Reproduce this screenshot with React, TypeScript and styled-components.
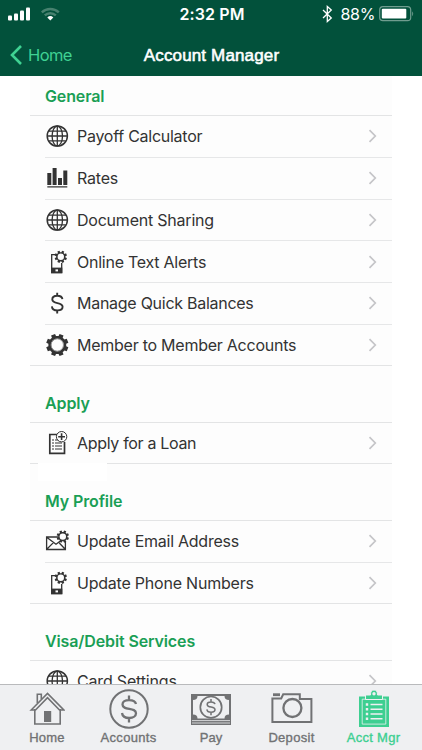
import React from 'react';
import styled, { createGlobalStyle } from 'styled-components';

const GlobalStyle = createGlobalStyle`
  * { box-sizing: border-box; }
  body { margin: 0; background: #fff; font-family: Inter, sans-serif; }
`;

const Screen = styled.div`
  width: 422px;
  height: 750px;
  display: flex;
  flex-direction: column;
  overflow: hidden;
  background: #fff;
`;

const Header = styled.header`
  flex: none;
  height: 76px;
  background: #02513b;
  color: #fff;
`;

const StatusBar = styled.div`
  display: grid;
  grid-template-columns: 1fr auto 1fr;
  align-items: center;
  height: 28px;
  padding: 0 8px;
`;

const Clock = styled.span`
  font-size: 16px;
  font-weight: 600;
  letter-spacing: 0.1px;
  padding-left: 2px;
  margin-top: -1px;
`;

const Signals = styled.div`
  display: flex;
  align-items: center;
  gap: 10px;
  margin-top: -1px;
`;

const Power = styled.div`
  display: flex;
  align-items: center;
  justify-content: flex-end;
  margin-right: -1px;
`;

const Percent = styled.span`
  font-size: 16px;
  letter-spacing: -0.35px;
  margin: 0 4px 0 8px;
`;

const NavBar = styled.nav`
  display: grid;
  grid-template-columns: 1fr auto 1fr;
  align-items: center;
  height: 54px;
  padding: 0 10px;
`;

const Back = styled.a`
  display: flex;
  align-items: center;
  gap: 6px;
  color: #3fd293;
  font-size: 16.5px;
  letter-spacing: -0.6px;
`;

const Title = styled.h1`
  margin: 1px 0 0 1px;
  font: 400 17px "Liberation Sans", sans-serif;
  letter-spacing: 0.15px;
  -webkit-text-stroke: 0.55px currentColor;
`;

const Content = styled.main`
  flex: 1;
  min-height: 0;
  overflow: hidden;
  margin: 0 30px;
  background: #fdfdfd;
`;

const SectionTitle = styled.h2<{ $first?: boolean }>`
  margin: 0;
  height: ${p => (p.$first ? 40 : 57)}px;
  padding: ${p => (p.$first ? 10 : 27)}px 0 0 15px;
  border-bottom: 1px solid #e3e4e5;
  font-size: 16px;
  line-height: 20px;
  font-weight: 600;
  letter-spacing: -0.12px;
  color: #1a9f55;
`;

const Rows = styled.ul<{ $gap?: boolean }>`
  position: relative;
  list-style: none;
  margin: 0;
  padding: 0;
  border-bottom: 1px solid #e3e4e5;
  ${p => p.$gap && `
    &::after {
      content: '';
      position: absolute;
      left: 8px;
      top: 40px;
      width: 69px;
      height: 18px;
      background: #fff;
    }
  `}
`;

const Row = styled.li`
  display: flex;
  align-items: center;
  height: 41.75px;
  margin-left: 15px;
  padding-right: 15px;
  border-bottom: 1px solid #e6e7e8;
  color: #333;
  &:last-child { border-bottom: 0; height: 40px; }
`;

const IconSlot = styled.span`
  display: flex;
  flex: none;
  width: 24px;
  height: 24px;
  margin-right: 8px;
`;

const Label = styled.span<{ $track: number }>`
  flex: 1;
  font-size: 16px;
  white-space: nowrap;
  letter-spacing: ${p => p.$track}px;
`;

const TabBar = styled.footer`
  flex: none;
  height: 66px;
  padding-left: 14px;
  border-top: 1px solid #b9babc;
  background: #eff0f2;
`;

const Tabs = styled.div`
  display: grid;
  grid-template-columns: 66px 97px 68px 93px 71px;
`;

const Tab = styled.a<{ $active?: boolean }>`
  display: flex;
  flex-direction: column;
  align-items: center;
  color: ${p => (p.$active ? '#3dcf91' : '#717274')};
`;

const TabIcon = styled.span`
  display: flex;
  align-items: center;
  justify-content: center;
  height: 45px;
  padding-top: 3px;
`;

const TabLabel = styled.span<{ $track: number }>`
  font: 13px/16px "Liberation Sans", sans-serif;
  letter-spacing: ${p => p.$track}px;
  -webkit-text-stroke: 0.35px currentColor;
`;

const gearPoints = (cx: number, cy: number, outer: number, inner: number) => {
  const pts: string[] = [];
  for (let i = 0; i < 8; i++) {
    const mid = ((i + 0.5) * Math.PI) / 4;
    [[-0.25, inner], [-0.19, outer], [0.19, outer], [0.25, inner]].forEach(([a, r]) =>
      pts.push(`${(cx + r * Math.cos(mid + a)).toFixed(2)},${(cy + r * Math.sin(mid + a)).toFixed(2)}`));
  }
  return pts.join(' ');
};

const SmallGear = ({ x, y }: { x: number; y: number }) => (
  <g>
    <polygon points={gearPoints(x, y, 6.3, 4.7)} fill="#333" stroke="none" />
    <circle cx={x} cy={y} r="3.2" fill="#fdfdfd" stroke="none" />
  </g>
);

const Globe = () => (
  <svg width="24" height="24" fill="none" stroke="#333" strokeWidth="1.3">
    <circle cx="12.3" cy="12" r="10.1" strokeWidth="1.5" />
    <ellipse cx="12.3" cy="12" rx="5.2" ry="10" />
    <path d="M12.3 2v20M2.3 12h20M3.8 7.2h17M3.8 16.8h17" />
  </svg>
);
const Bars = () => (
  <svg width="24" height="24" fill="#333">
    <path d="M2.3 7h4v12h-4zM7.6 2h4v17h-4zM13 12h4v7h-4zM18.3 4.5h4V19h-4zM2.3 20.2h20v1.4h-20z" />
  </svg>
);
const Phone = () => (
  <svg width="24" height="24">
    <path d="M10.5 4.6H6.7v18h10V13" fill="none" stroke="#333" strokeWidth="1.3" />
    <path d="M6 17.6h11.3v5.6H6z" fill="#333" />
    <path d="M10.5 19.4H13v2h-2.5z" fill="#fdfdfd" />
    <SmallGear x={15.8} y={6.8} />
  </svg>
);
const Dollar = () => (
  <svg width="24" height="24" fill="none" stroke="#333" strokeWidth="1.9">
    <path d="M12.2 1.7v3M12.2 19v3.5M17.4 8.2c-.2-2.2-2.2-3.4-5.2-3.4-2.8 0-4.9 1.4-4.9 3.6 0 5.1 10.3 2.3 10.3 7.4 0 2.2-2.1 3.6-5.1 3.6-3.4 0-5.4-1.6-5.6-4.1" />
  </svg>
);
const Gear = () => (
  <svg width="24" height="24">
    <polygon points={gearPoints(12.3, 12, 11.3, 9)} fill="#333" />
    <circle cx="12.3" cy="12" r="6.2" fill="#fdfdfd" stroke="#929292" strokeWidth="1" />
  </svg>
);
const LoanForm = () => (
  <svg width="24" height="24" fill="none" stroke="#333">
    <path d="M12 3.5H4.8v18.8h14.7V11" strokeWidth="1.7" />
    <path d="M7 9h2M10 9h4M7 12h2M10 12h7M7 15h2M10 15h7M7 18h2M10 18h7" />
    <circle cx="16.6" cy="5.7" r="5.2" fill="#fdfdfd" />
    <path d="M13.2 5.7H20M16.6 2.3v6.8" strokeWidth="1.6" />
  </svg>
);
const Mail = () => (
  <svg width="24" height="24" fill="none" stroke="#333" strokeWidth="1.3">
    <path d="M13 8H1.6v12.5h18.8V12M2 8.4l9 6.8 5-3.6M2 20l6.4-6.4M20 20l-5.7-6" />
    <SmallGear x={17.8} y={7.6} />
  </svg>
);
const Chevron = () => (
  <svg width="9" height="14" fill="none" stroke="#c5c5c8" strokeWidth="1.7">
    <path d="M1.5 1.2L7.3 7l-5.8 5.8" />
  </svg>
);

const HomeIcon = () => (
  <svg width="36" height="40" fill="none" stroke="currentColor" strokeWidth="1.6">
    <path d="M5.8 20v15h25.4V20M2.2 21L18.5 4.5 34.8 21h-4.3l-12-12.3-12 12.3z" />
    <path d="M8.3 14V5.3h4V10" />
    <path d="M15 22h7.2v11H15z" fill="currentColor" stroke="none" />
  </svg>
);
const AccountsIcon = () => (
  <svg width="42" height="42" fill="none" stroke="currentColor" strokeWidth="2">
    <circle cx="21" cy="21" r="18.7" />
    <path d="M21 7.5v5M21 29.5v5M28 16c-.5-2.4-3.2-3.9-7-3.9s-6.5 1.7-6.5 4.3c0 6.5 13.5 2.4 13.5 8.9 0 2.7-2.8 4.7-6.7 4.7-4.3 0-6.9-2-7.3-5" strokeWidth="2.3" />
  </svg>
);
const PayIcon = () => (
  <svg width="42" height="36" fill="none" stroke="currentColor">
    <path d="M1 3h40v31H1z" fill="currentColor" stroke="none" />
    <path d="M7.5 5h27c0 2.6 1.5 4 4.5 4v14.5c-3 0-4.5 1.2-4.5 4h-27c0-2.8-1.5-4-4.5-4V9c3 0 4.5-1.4 4.5-4z" fill="#eff0f2" stroke="none" />
    <path d="M2 29.6h38M2 32h38" stroke="#eff0f2" strokeWidth=".8" />
    <circle cx="21" cy="16.2" r="10.7" fill="#eff0f2" strokeWidth="1.7" />
    <path d="M21 8v3M21 21v3.3M25 13.2c-.3-1.5-1.8-2.3-4-2.3s-3.8 1-3.8 2.5c0 3.8 7.8 1.6 7.8 5.2 0 1.6-1.6 2.7-3.9 2.7-2.5 0-4-1-4.2-2.9" strokeWidth="1.5" />
  </svg>
);
const CameraIcon = () => (
  <svg width="42" height="36" fill="none" stroke="currentColor" strokeWidth="2">
    <path d="M1.4 7.4h8.8l2-4.2h16.6v4.9h11.6v22.8h-39z" />
    <circle cx="21.4" cy="17" r="9" strokeWidth="2.3" />
    <path d="M2 2.3h7v2.8H2z" fill="currentColor" stroke="none" />
  </svg>
);
const ClipboardIcon = () => (
  <svg width="32" height="40" fill="none">
    <path d="M1 7.5h30V38H1z" fill="currentColor" />
    <path d="M4.2 10.2h23.6v24.9H4.2z" stroke="#eff0f2" strokeWidth=".8" />
    <path d="M7.5 10.5V6h5C12.4 2.5 13.7 1 16 1s3.6 1.5 3.5 5h5v4.5z" fill="currentColor" stroke="#eff0f2" />
    <circle cx="16" cy="4.8" r="1.7" fill="#eff0f2" />
    <path d="M7.8 15.5h2.4M7.8 20.2h2.4M7.8 25h2.4M7.8 29.7h2.4" stroke="#eff0f2" strokeWidth="2.4" />
    <path d="M12.5 15.5h12M12.5 20.2h12M12.5 25h12M12.5 29.7h12" stroke="#eff0f2" strokeWidth="1.4" />
  </svg>
);

type Item = { label: string; icon: React.FC; track: number };
const sections: { title: string; items: Item[]; gap?: boolean }[] = [
  {
    title: 'General',
    items: [
      { label: 'Payoff Calculator', icon: Globe, track: -0.26 },
      { label: 'Rates', icon: Bars, track: -0.2 },
      { label: 'Document Sharing', icon: Globe, track: -0.22 },
      { label: 'Online Text Alerts', icon: Phone, track: -0.25 },
      { label: 'Manage Quick Balances', icon: Dollar, track: -0.27 },
      { label: 'Member to Member Accounts', icon: Gear, track: -0.25 },
    ],
  },
  { title: 'Apply', gap: true, items: [{ label: 'Apply for a Loan', icon: LoanForm, track: -0.32 }] },
  {
    title: 'My Profile',
    items: [
      { label: 'Update Email Address', icon: Mail, track: -0.25 },
      { label: 'Update Phone Numbers', icon: Phone, track: -0.22 },
    ],
  },
  { title: 'Visa/Debit Services', items: [{ label: 'Card Settings', icon: Globe, track: -0.18 }] },
];

const tabs = [
  { label: 'Home', icon: HomeIcon, track: 0.2 },
  { label: 'Accounts', icon: AccountsIcon, track: 0.3 },
  { label: 'Pay', icon: PayIcon, track: 0 },
  { label: 'Deposit', icon: CameraIcon, track: 0.3 },
  { label: 'Acct Mgr', icon: ClipboardIcon, track: 0.3 },
];

export default function App() {
  return (
    <Screen>
      <GlobalStyle />
      <Header>
        <StatusBar>
          <Signals>
            <svg width="23" height="16" fill="#fff">
              <rect x="0" y="9.5" width="4" height="5" rx="1" />
              <rect x="6" y="7.5" width="4" height="7" rx="1" />
              <rect x="12" y="4.5" width="4" height="10" rx="1" />
              <rect x="18" y="1.5" width="4" height="13" rx="1" />
            </svg>
            <svg width="20" height="16" fill="none" strokeWidth="2.4">
              <path d="M.8 6.3a12.5 12.5 0 0 1 17 0M3.8 9.4a8 8 0 0 1 11 0" stroke="#47816f" />
              <path d="M6.3 11.4a4.6 4.6 0 0 1 6 0l-3 3.2z" fill="#fff" />
            </svg>
          </Signals>
          <Clock>2:32 PM</Clock>
          <Power>
            <svg width="11" height="18" fill="none" stroke="#fff" strokeWidth="1.3">
              <path d="M1 5l8.3 8L5.3 16.5v-15L9.3 5 1 13" />
            </svg>
            <Percent>88%</Percent>
            <svg width="36" height="16">
              <rect x=".7" y=".7" width="31" height="14" rx="3.2" fill="none" stroke="#709d8f" strokeWidth="1.2" />
              <rect x="2.8" y="2.8" width="24.5" height="9.8" rx="1" fill="#fff" />
              <path d="M33.2 5.2q2 2.5 0 5z" fill="#709d8f" />
            </svg>
          </Power>
        </StatusBar>
        <NavBar>
          <Back>
            <svg width="12" height="20" fill="none" stroke="currentColor" strokeWidth="2.6">
              <path d="M11 1L2 10l9 9" />
            </svg>
            Home
          </Back>
          <Title>Account Manager</Title>
        </NavBar>
      </Header>
      <Content>
        {sections.map((s, i) => (
          <section key={s.title}>
            <SectionTitle $first={i === 0}>{s.title}</SectionTitle>
            <Rows $gap={s.gap}>
              {s.items.map(({ label, icon: Icon, track }) => (
                <Row key={label}>
                  <IconSlot><Icon /></IconSlot>
                  <Label $track={track}>{label}</Label>
                  <Chevron />
                </Row>
              ))}
            </Rows>
          </section>
        ))}
      </Content>
      <TabBar>
        <Tabs>
          {tabs.map(({ label, icon: Icon, track }) => (
            <Tab key={label} $active={label === 'Acct Mgr'}>
              <TabIcon><Icon /></TabIcon>
              <TabLabel $track={track}>{label}</TabLabel>
            </Tab>
          ))}
        </Tabs>
      </TabBar>
    </Screen>
  );
}
